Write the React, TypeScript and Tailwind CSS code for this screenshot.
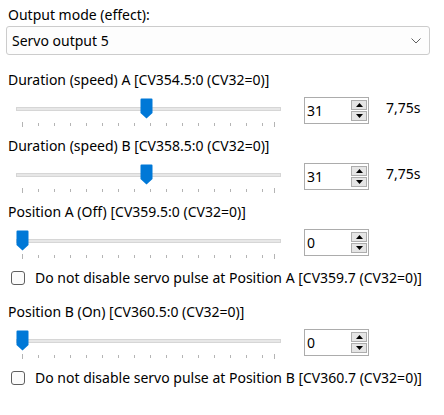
import React from 'react';

const FONT = { fontFamily: '"Noto Sans", "Open Sans", sans-serif' };

const TICKS = [0, 4, 8, 12, 16, 20, 24, 28, 32, 36, 40, 44, 48, 52, 56, 60, 63];

function Thumb() {
  return (
    <svg width="13" height="21" viewBox="0 0 13 21">
      <path d="M1.5 0.5 H11.5 A1 1 0 0 1 12.5 1.5 V15 L6.5 20.5 L0.5 15 V1.5 A1 1 0 0 1 1.5 0.5 Z" fill="#0078d7" />
    </svg>
  );
}

function Spinner({ value }: { value: string }) {
  return (
    <div className="flex h-[27px] w-[65px] items-stretch border border-[#acacac] bg-white">
      <div className="flex flex-1 items-center pl-[2px] text-[14px] text-black">{value}</div>
      <div className="flex w-[17px] flex-col gap-[1px] py-[2px] pr-[1px]">
        <div className="flex flex-1 items-center justify-center border border-[#adadad] bg-[#e5e5e5]">
          <svg width="7" height="4" viewBox="0 0 7 4"><path d="M0 4 L3.5 0 L7 4 Z" fill="#000" /></svg>
        </div>
        <div className="flex flex-1 items-center justify-center border border-[#adadad] bg-[#e5e5e5]">
          <svg width="7" height="4" viewBox="0 0 7 4"><path d="M0 0 L3.5 4 L7 0 Z" fill="#000" /></svg>
        </div>
      </div>
    </div>
  );
}

function Slider({ value, max = 63 }: { value: number; max?: number }) {
  const span = 252;
  return (
    <div className="relative h-[46px] w-[290px] shrink-0">
      <div className="absolute left-[16px] top-[17px] h-[4px] w-[265px] border border-[#d6d6d6] bg-[#e7e7e7]" />
      {TICKS.map((t) => {
        const end = t === 0 || t === max;
        return (
          <div
            key={t}
            className={`absolute w-[1px] bg-[#b4b4b4] ${end ? 'top-[32px] h-[5px]' : 'top-[33px] h-[3px]'}`}
            style={{ left: 22 + Math.round((span * t) / max) }}
          />
        );
      })}
      <div className="absolute top-[8px]" style={{ left: 16 + Math.round((span * value) / max) }}>
        <Thumb />
      </div>
    </div>
  );
}

function SliderRow({ label, value, spin, extra }: { label: string; value: number; spin: string; extra?: string }) {
  return (
    <div className="flex flex-col">
      <div className="h-[20px] whitespace-nowrap pl-[8px] leading-[20px]">{label}</div>
      <div className="flex h-[46px]">
        <Slider value={value} />
        <div className="ml-[14px] pt-[7px]">
          <Spinner value={spin} />
        </div>
        {extra && <div className="ml-[17px] pt-[8px] leading-[20px]">{extra}</div>}
      </div>
    </div>
  );
}

function Check({ label }: { label: string }) {
  return (
    <div className="flex h-[20px] items-center whitespace-nowrap pl-[11px] leading-[20px]">
      <div className="mr-[10px] h-[14px] w-[14px] shrink-0 rounded-[3px] border border-[#5f5f5f] bg-[#fbfbfb]" />
      <span>{label}</span>
    </div>
  );
}

export default function App() {
  return (
    <div className="h-[415px] w-[444px] overflow-hidden bg-white text-[14px] text-black" style={FONT}>
      <div className="flex flex-col pt-[5px]">
        <div className="h-[20px] pl-[8px] leading-[20px]">Output mode (effect):</div>

        <div className="ml-[6px] mt-[1px] flex h-[29px] w-[424px] items-center justify-between rounded-[3px] border border-[#cccccc] bg-[#fdfdfd] pl-[5px] pr-[8px]">
          <span>Servo output 5</span>
          <svg width="10" height="6" viewBox="0 0 10 6">
            <path d="M0.5 0.5 L5 5 L9.5 0.5" fill="none" stroke="#606060" strokeWidth="1" />
          </svg>
        </div>

        <div className="mt-[15px]">
          <SliderRow label="Duration (speed) A [CV354.5:0 (CV32=0)]" value={31} spin="31" extra="7,75s" />
        </div>
        <SliderRow label="Duration (speed) B [CV358.5:0 (CV32=0)]" value={31} spin="31" extra="7,75s" />
        <SliderRow label="Position A (Off) [CV359.5:0 (CV32=0)]" value={0} spin="0" />
        <Check label="Do not disable servo pulse at Position A [CV359.7 (CV32=0)]" />
        <div className="mt-[14px]">
          <SliderRow label="Position B (On) [CV360.5:0 (CV32=0)]" value={0} spin="0" />
        </div>
        <Check label="Do not disable servo pulse at Position B [CV360.7 (CV32=0)]" />
      </div>
    </div>
  );
}
